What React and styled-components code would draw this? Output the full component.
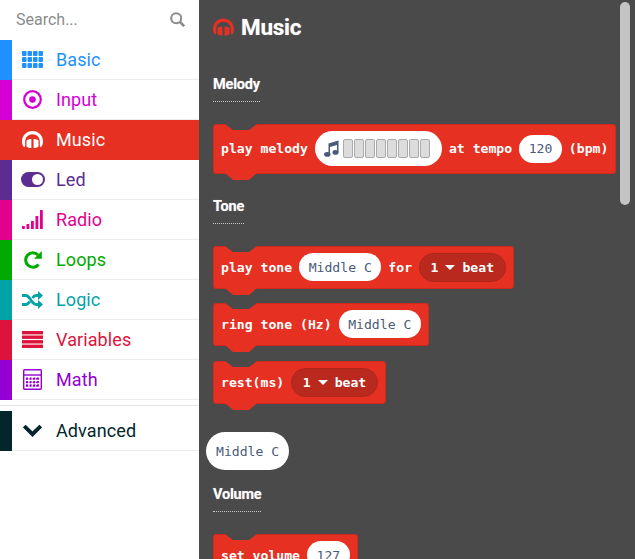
import React from 'react'
import styled, { createGlobalStyle } from 'styled-components'

const GlobalStyle = createGlobalStyle`
    html, body {
        margin: 0;
        height: 100%;
        overflow: hidden;
        background: #4b4a4b;
    }
    #root {
        height: 100%;
    }
`

const RED = '#e63022'
const RED_DARK = '#b9291e'
const FLYOUT = '#4b4a4b'

const Page = styled.div`
    display: flex;
    width: 635px;
    height: 559px;
    overflow: hidden;
    font-family: Roboto, "Liberation Sans", sans-serif;
`

const Sidebar = styled.aside`
    width: 199px;
    flex: none;
    background: #fff;
`

const SearchBar = styled.div`
    height: 40px;
    display: flex;
    align-items: center;
    justify-content: space-between;
    padding: 0 14px 2px 16px;
    box-sizing: border-box;
    font-size: 16px;
    color: #8b8b8b;
`

const Row = styled.div`
    height: 40px;
    box-sizing: border-box;
    display: flex;
    align-items: center;
    font-size: 18px;
    letter-spacing: 0.1px;
    color: ${p => (p.$active ? '#fff' : p.$color)};
    background: ${p => (p.$active ? p.$color : '#fff')};
    border-bottom: 1px solid ${p => (p.$active ? 'transparent' : '#ececec')};
`

const ColorBar = styled.div`
    width: 12px;
    height: 40px;
    flex: none;
    align-self: flex-start;
    background: ${p => p.$color};
`

const IconSlot = styled.div`
    width: 41px;
    margin-right: 3px;
    flex: none;
    display: flex;
    justify-content: center;
    align-items: center;
    color: ${p => p.$color};
`

const Divider = styled.div`
    margin-top: 5px;
    height: 1px;
    background: #e4e4e4;
    margin-bottom: 5px;
`

const Flyout = styled.main`
    position: relative;
    flex: 1;
    min-width: 0;
    background: ${FLYOUT};
    padding: 0 0 0 14px;
`

const Title = styled.div`
    height: 54px;
    display: flex;
    align-items: center;
    gap: 7px;
    color: #fff;
    font-size: 22.5px;
    font-weight: 700;
    letter-spacing: -0.25px;
    text-shadow: 0 0 1px rgba(255, 255, 255, 0.45);
`

const Heading = styled.div`
    width: fit-content;
    margin-top: ${p => p.$top}px;
    padding-bottom: 8px;
    color: #fff;
    font-size: 14.5px;
    line-height: 17px;
    font-weight: 700;
    letter-spacing: -0.2px;
    text-shadow: 0 0 1px rgba(255, 255, 255, 0.45);
    border-bottom: 1px dotted #c8c8c8;
`

const Block = styled.div`
    position: relative;
    width: fit-content;
    margin-top: ${p => p.$top}px;
    height: ${p => p.$height || 43}px;
    display: flex;
    align-items: center;
    gap: 7px;
    padding: 0 7px 1px;
    box-sizing: border-box;
    background: ${RED};
    border: 1px solid #d02a1e;
    border-radius: 3px;
    color: #fff;
    font-family: "DejaVu Sans Mono", monospace;
    font-size: 13.13px;
    font-weight: 700;
    white-space: nowrap;

    &::before {
        content: "";
        position: absolute;
        top: -1px;
        left: 11px;
        width: 32px;
        height: 6px;
        background: ${FLYOUT};
        clip-path: polygon(0 0, 100% 0, 75% 100%, 25% 100%);
    }

    &::after {
        content: "";
        position: absolute;
        bottom: -7px;
        left: 11px;
        width: 32px;
        height: 7px;
        background: ${RED};
        clip-path: polygon(0 0, 100% 0, 75% 100%, 25% 100%);
    }
`

const Pill = styled.span`
    display: inline-flex;
    align-items: center;
    height: 28px;
    padding: 0 9.5px;
    background: #fff;
    border-radius: 14px;
    color: #4b5a78;
    font-weight: 400;
`

const LoosePill = styled(Pill)`
    margin: 28px 0 0 -7px;
    height: 38px;
    padding: 0 10px;
    border-radius: 19px;
    width: fit-content;
    font-family: "DejaVu Sans Mono", monospace;
    font-size: 13.13px;
`

const MelodyPill = styled(Pill)`
    height: 35px;
    padding: 0 12px 0 9px;
    border-radius: 18px;
`

const NoteCells = styled.span`
    display: flex;
    gap: 1px;
    margin-left: 4px;
`

const NoteCell = styled.span`
    width: 10px;
    height: 19px;
    box-sizing: border-box;
    background: #dcdcdc;
    border: 1px solid #a9a9a9;
    border-radius: 2px;
`

const Dropdown = styled.span`
    display: inline-flex;
    align-items: center;
    gap: 7px;
    height: 29px;
    padding: 0 10.5px;
    border-radius: 15px;
    background: ${RED_DARK};
    border: 1px solid #ad261c;
    box-sizing: border-box;
`

const Caret = styled.span`
    width: 0;
    height: 0;
    border-left: 5px solid transparent;
    border-right: 5px solid transparent;
    border-top: 5px solid #fff;
`

const ScrollThumb = styled.div`
    position: absolute;
    top: 2px;
    right: 5px;
    width: 10px;
    height: 203px;
    border-radius: 5px;
    background: #c4c4c4;
`

const Headphones = ({ width = 21, height = 17, color = 'currentColor' }) => (
    <svg width={width} height={height} viewBox="0 0 21 17" fill={color}>
        <path d="M10.500 0C4.700 0 0 4.600 0 10.400c0 2.400.7 4.300 1.800 5.400.4.400 1 .3 1.200-.2l.2-.6V10.400C3.200 6.200 6.400 3.200 10.500 3.200s7.300 3 7.300 7.200v4.600l.2.600c.2.500.8.600 1.200.2 1.100-1.100 1.800-3 1.800-5.400C21 4.600 16.300 0 10.500 0z" />
        <path d="M4.500 9.500C5.800 8.500 7.500 8 9.400 8v9C7.500 17 5.800 16.400 4.500 15.400zM16.500 9.500C15.200 8.500 13.500 8 11.600 8v9c1.900 0 3.600-.6 4.900-1.600z" />
    </svg>
)

const GridIcon = () => (
    <svg width="21" height="17" viewBox="0 0 21 17" fill="currentColor">
        {[0, 6, 12].map(y =>
            [0, 5.500, 11, 16.500].map(x => (
                <rect key={`${x}-${y}`} x={x} y={y} width="4.500" height="5" rx="1" />
            ))
        )}
    </svg>
)

const TargetIcon = () => (
    <svg width="19" height="19" viewBox="0 0 19 19" fill="none" stroke="currentColor">
        <circle cx="9.500" cy="9.500" r="8.300" strokeWidth="2.200" />
        <circle cx="9.500" cy="9.500" r="3.300" fill="currentColor" strokeWidth="0" />
    </svg>
)

const ToggleIcon = () => (
    <svg width="24" height="15" viewBox="0 0 24 15">
        <rect width="24" height="15" rx="7.500" fill="currentColor" />
        <circle cx="16.500" cy="7.500" r="5.500" fill="#fff" />
    </svg>
)

const SignalIcon = () => (
    <svg width="21" height="19" viewBox="0 0 21 19" fill="currentColor">
        <rect x="0" y="16" width="2.800" height="3" />
        <rect x="4.500" y="14" width="2.800" height="5" />
        <rect x="9" y="11" width="2.800" height="8" />
        <rect x="13.500" y="6" width="2.800" height="13" />
        <rect x="18" y="0" width="2.800" height="19" />
    </svg>
)

const LoopIcon = () => (
    <svg width="20" height="20" viewBox="0 0 20 20" fill="none" stroke="currentColor" strokeWidth="3">
        <path d="M15.500 14.500A7.200 7.200 0 1 1 15 5" />
        <path d="M18.800 1v7.800H11z" fill="currentColor" stroke="none" />
    </svg>
)

const ShuffleIcon = () => (
    <svg width="21" height="18" viewBox="0 0 21 18" fill="none" stroke="currentColor" strokeWidth="2.800">
        <path d="M0 4.500h4c4 0 5.500 9 10 9h3M0 13.500h4c1.500 0 2.700-1.400 3.700-3M10.500 7C11.500 5.500 12.800 4.500 14 4.500h3" />
        <path d="M16 0l5 4.500-5 4.500zM16 9l5 4.500-5 4.500z" fill="currentColor" stroke="none" />
    </svg>
)

const LinesIcon = () => (
    <svg width="21" height="17" viewBox="0 0 21 17" fill="currentColor">
        <rect y="0" width="21" height="3.400" />
        <rect y="4.500" width="21" height="3.400" />
        <rect y="9.100" width="21" height="3.400" />
        <rect y="13.600" width="21" height="3.400" />
    </svg>
)

const CalcIcon = () => (
    <svg width="19" height="21" viewBox="0 0 19 21" fill="none" stroke="currentColor">
        <rect x="0.700" y="0.700" width="17.600" height="19.600" rx="1" strokeWidth="1.400" />
        <path d="M1 6h17" strokeWidth="1.400" />
        <path d="M4 8.500v10M7.700 8.500v10M11.400 8.500v10M15 8.500v10M3 9.800h13M3 13.300h13M3 16.800h13" strokeWidth="1.800" strokeDasharray="2.200 1.200" />
    </svg>
)

const ChevronIcon = () => (
    <svg width="19" height="13" viewBox="0 0 19 13" fill="none" stroke="currentColor" strokeWidth="3.800">
        <path d="M1.300 2l8.200 8.200L17.700 2" />
    </svg>
)

const SearchIcon = () => (
    <svg width="15" height="15" viewBox="0 0 15 15" fill="none" stroke="#8b8b8b">
        <circle cx="6.200" cy="6.200" r="5" strokeWidth="2" />
        <path d="M10 10l4.200 4.200" strokeWidth="2.600" />
    </svg>
)

const NoteIcon = () => (
    <svg width="15" height="17" viewBox="0 0 15 17" fill="#4b5a78">
        <path d="M4.500 3.500L14.500 0.500v12h-1.500V5L6 7v8H4.500z" />
        <ellipse cx="3.300" cy="14.400" rx="3.200" ry="2.400" />
        <ellipse cx="11.500" cy="12.400" rx="3" ry="2.400" />
    </svg>
)

const categories = [
    { name: 'Basic', color: '#1e90ff', icon: GridIcon },
    { name: 'Input', color: '#d400d4', icon: TargetIcon },
    { name: 'Music', color: RED, icon: Headphones, active: true },
    { name: 'Led', color: '#5c2d91', icon: ToggleIcon },
    { name: 'Radio', color: '#e3008c', icon: SignalIcon },
    { name: 'Loops', color: '#00aa00', icon: LoopIcon },
    { name: 'Logic', color: '#00a4a6', icon: ShuffleIcon },
    { name: 'Variables', color: '#dc143c', icon: LinesIcon },
    { name: 'Math', color: '#9400d3', icon: CalcIcon },
]

const Category = ({ name, color, icon: Icon, active }) => (
    <Row $color={color} $active={active}>
        <ColorBar $color={color} />
        <IconSlot $color={active ? '#fff' : color}><Icon /></IconSlot>
        {name}
    </Row>
)

const App = () => (
    <Page>
        <GlobalStyle />
        <Sidebar>
            <SearchBar>Search...<SearchIcon /></SearchBar>
            {categories.map(c => <Category key={c.name} {...c} />)}
            <Divider />
            <Row $color="#02262c">
                <ColorBar $color="#02262c" />
                <IconSlot $color="#02262c"><ChevronIcon /></IconSlot>
                Advanced
            </Row>
        </Sidebar>
        <Flyout>
            <Title><Headphones width={21} height={18} color={RED} />Music</Title>
            <Heading $top={22}>Melody</Heading>
            <Block $top={22} $height={50}>
                play melody
                <MelodyPill>
                    <NoteIcon />
                    <NoteCells>
                        {Array.from({ length: 8 }).map((_, i) => <NoteCell key={i} />)}
                    </NoteCells>
                </MelodyPill>
                at tempo
                <Pill>120</Pill>
                (bpm)
            </Block>
            <Heading $top={24}>Tone</Heading>
            <Block $top={22}>
                play tone
                <Pill>Middle C</Pill>
                for
                <Dropdown>1<Caret />beat</Dropdown>
            </Block>
            <Block $top={14}>
                ring tone (Hz)
                <Pill>Middle C</Pill>
            </Block>
            <Block $top={15}>
                rest(ms)
                <Dropdown>1<Caret />beat</Dropdown>
            </Block>
            <LoosePill>Middle C</LoosePill>
            <Heading $top={16}>Volume</Heading>
            <Block $top={22}>
                set volume
                <Pill>127</Pill>
            </Block>
            <ScrollThumb />
        </Flyout>
    </Page>
)

export default App
